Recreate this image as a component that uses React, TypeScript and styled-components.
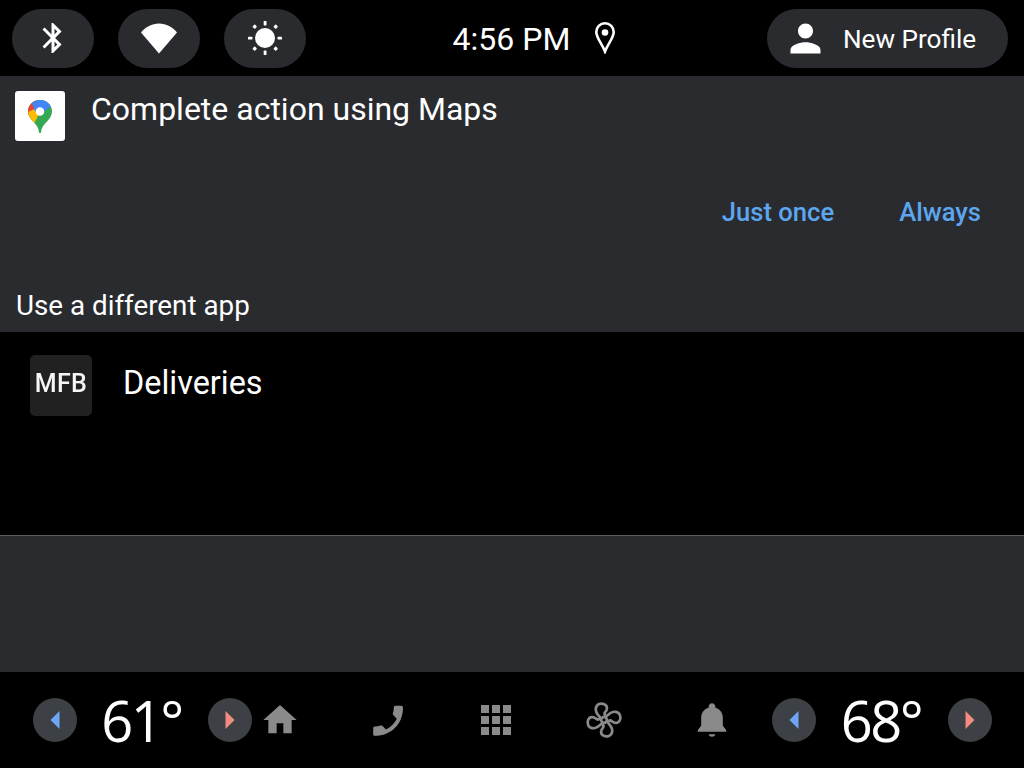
import styled, { createGlobalStyle } from "styled-components";

const GlobalStyle = createGlobalStyle`
  html, body {
    margin: 0;
    padding: 0;
    background: #000;
  }
  * {
    box-sizing: border-box;
  }
`;

const Screen = styled.div`
  width: 1024px;
  height: 768px;
  display: flex;
  flex-direction: column;
  background: #000;
  color: #fff;
  font-family: Roboto, "Liberation Sans", sans-serif;
  overflow: hidden;
`;

const TopBar = styled.div`
  height: 76px;
  flex: none;
  display: grid;
  grid-template-columns: 1fr auto 1fr;
  align-items: center;
  padding: 0 16px 0 12px;
`;

const PillRow = styled.div`
  display: flex;
  gap: 24px;
`;

const Pill = styled.div`
  width: 82px;
  height: 59px;
  border-radius: 30px;
  background: #292b2f;
  display: flex;
  align-items: center;
  justify-content: center;
`;

const Clock = styled.div`
  display: flex;
  align-items: center;
  gap: 25px;
  font-size: 32px;
  margin-left: 48px;
`;

const ClockTime = styled.span`
  margin-top: 2px;
`;

const ProfilePill = styled.div`
  justify-self: end;
  width: 241px;
  height: 59px;
  border-radius: 30px;
  background: #292b2f;
  display: flex;
  align-items: center;
  padding-left: 16px;
  gap: 15px;
  font-size: 26.1px;
`;

const ProfileName = styled.span`
  margin-top: 2px;
`;

const Chooser = styled.div`
  height: 256px;
  flex: none;
  background: #292b2f;
  display: flex;
  flex-direction: column;
`;

const TitleRow = styled.div`
  display: flex;
  padding: 15px 0 0 15px;
  gap: 26px;
`;

const MapsTile = styled.div`
  width: 50px;
  height: 50px;
  background: #fff;
  border-radius: 3px;
  display: flex;
  align-items: center;
  justify-content: center;
`;

const Title = styled.div`
  font-size: 32px;
  line-height: 36px;
`;

const Actions = styled.div`
  display: flex;
  justify-content: flex-end;
  gap: 65px;
  padding: 56px 43px 0 0;
`;

const ActionLabel = styled.div`
  color: #5ca6ef;
  font-size: 25.6px;
  font-weight: 500;
  line-height: 30px;
`;

const SectionLabel = styled.div`
  font-size: 27.8px;
  line-height: 32px;
  padding: 63px 0 0 16px;
`;

const AppList = styled.div`
  height: 204px;
  flex: none;
  display: flex;
  align-items: flex-start;
  gap: 31px;
  padding: 23px 0 0 30px;
  border-bottom: 1px solid #5a5b5e;
`;

const AppTile = styled.div`
  width: 62px;
  height: 61px;
  border-radius: 5px;
  background: #212121;
  display: flex;
  align-items: center;
  justify-content: center;
  padding-bottom: 5px;
`;

const AppTileText = styled.span`
  font-size: 25px;
  font-weight: 500;
  color: #f6f6f6;
  filter: blur(0.7px);
  letter-spacing: 0.3px;
`;

const AppName = styled.div`
  font-size: 32.4px;
  line-height: 36px;
  margin-top: 10px;
`;

const Filler = styled.div`
  height: 136px;
  flex: none;
  background: #292b2f;
`;

const BottomBar = styled.div`
  flex: 1;
  display: flex;
  align-items: center;
  padding: 0 32px 0 33px;
`;

const Climate = styled.div`
  display: flex;
  align-items: center;
  flex: none;
`;

const Temp = styled.div<{ $width: number }>`
  width: ${(p) => p.$width}px;
  padding-right: 2px;
  text-align: center;
  font-family: "Open Sans", "Noto Sans", sans-serif;
  font-size: 56px;
  line-height: 60px;
  letter-spacing: -2.5px;
`;

const Arrow = styled.div`
  width: 44px;
  height: 44px;
  border-radius: 50%;
  background: #3d4145;
  display: flex;
  align-items: center;
  justify-content: center;
`;

const NavIcons = styled.div`
  flex: 1;
  display: flex;
  justify-content: space-between;
  padding: 0 40px 0 8px;
`;

const NavIcon = styled.div`
  width: 40px;
  height: 40px;
  display: flex;
  align-items: center;
  justify-content: center;
`;

const LeftArrow = ({ color }: { color: string }) => (
  <svg width="10" height="18" viewBox="0 0 10 18">
    <path d="M9.5 0 L0.5 9 L9.5 18 Z" fill={color} />
  </svg>
);

const RightArrow = ({ color }: { color: string }) => (
  <svg width="10" height="18" viewBox="0 0 10 18">
    <path d="M0.5 0 L9.5 9 L0.5 18 Z" fill={color} />
  </svg>
);

const MapsPin = () => (
  <svg width="24" height="35" viewBox="0 0 26 36">
    <defs>
      <clipPath id="pin">
        <path d="M13 0C5.8 0 0 5.6 0 12.6c0 4 1.8 6.8 4.4 9.8 3.4 3.800 7 6.600 7.400 12.400.1.700.6 1.200 1.200 1.200s1.100-.5 1.200-1.200c.4-5.800 4-8.600 7.400-12.400 2.600-3 4.400-5.800 4.400-9.800C26 5.600 20.200 0 13 0z" />
      </clipPath>
    </defs>
    <g clipPath="url(#pin)">
      <rect width="26" height="36" fill="#34a853" />
      <path d="M0 0H26V6L17 13 7 4 Z" fill="#4285f4" />
      <path d="M0 0 H8 L12 9 L2 18 L0 16 Z" fill="#ea4335" />
      <path d="M0 13 L9 9 L13 13 L7 25 L2 20 Z" fill="#fbbc04" />
      <path d="M4 3 L9 1 L14 8 L8 13 Z" fill="#4285f4" />
    </g>
    <circle cx="13" cy="12.6" r="4.6" fill="#fff" />
  </svg>
);

const Sun = () => (
  <svg width="36" height="36" viewBox="0 0 36 36" fill="#fff">
    <circle cx="18" cy="18" r="10" />
    <rect x="16.7" y="1" width="2.8" height="4.4" rx="0.6" />
    <rect x="16.7" y="30.600" width="2.8" height="4.4" rx="0.6" />
    <rect x="1" y="16.7" width="4.4" height="2.8" rx="0.6" />
    <rect x="30.600" y="16.7" width="4.4" height="2.8" rx="0.6" />
    <rect x="6" y="5" width="3.4" height="3.4" rx="0.8" transform="rotate(45 7.7 6.7)" />
    <rect x="27" y="5" width="3.4" height="3.4" rx="0.8" transform="rotate(45 28.7 6.7)" />
    <rect x="6" y="27" width="3.4" height="3.4" rx="0.8" transform="rotate(45 7.7 28.7)" />
    <rect x="27" y="27" width="3.4" height="3.4" rx="0.8" transform="rotate(45 28.7 28.7)" />
  </svg>
);

const GRID_CELLS = [0, 1, 2, 3, 4, 5, 6, 7, 8];
const FAN_ANGLES = [0, 90, 180, 270];

// pinwheel: each blade leans over, narrow on the side facing the hub
const Fan = () => (
  <svg width="40" height="40" viewBox="-20 -20 40 40" fill="none" stroke="#8a8a8a" strokeWidth="2.700" strokeLinecap="round" strokeLinejoin="round">
    {FAN_ANGLES.map((a) => (
      <path
        key={a}
        transform={`rotate(${a - 10})`}
        d="M-3 -2.500C-5 -6 -7.500 -9 -6 -13C-4.500 -17 0 -17.500 3 -15.500C6.500 -13 5 -9.500 2.500 -7.500C1 -6.300 1.500 -4.500 2.500 -3"
      />
    ))}
    <circle r="2.800" />
  </svg>
);

export default function App() {
  return (
    <>
      <GlobalStyle />
      <Screen>
        <TopBar>
          <PillRow>
            <Pill>
              <svg width="36" height="36" viewBox="0 0 24 24" fill="#fff">
                <path d="M17.710 7.710 12 2h-1v7.590L6.410 5 5 6.410 10.590 12 5 17.590 6.410 19 11 14.410V22h1l5.710-5.710-4.300-4.290 4.300-4.290zM13 5.830l1.880 1.880L13 9.590V5.830zm1.880 10.460L13 18.170v-3.760l1.880 1.880z" />
              </svg>
            </Pill>
            <Pill>
              <svg width="38" height="32" viewBox="0 0 38 32" fill="#fff">
                <path d="M19 31.500 1 10.500C5.500 5 11.800 1.500 19 1.500S32.500 5 37 10.500z" />
              </svg>
            </Pill>
            <Pill>
              <Sun />
            </Pill>
          </PillRow>
          <Clock>
            <ClockTime>4:56 PM</ClockTime>
            <svg width="20" height="32" viewBox="0 0 20 32" fill="none">
              <path d="M10 1.300C5 1.300 1.300 5.200 1.300 10c0 6 5.500 11 8.700 19.500C13.200 21 18.700 16 18.700 10 18.700 5.200 15 1.300 10 1.300z" stroke="#fff" strokeWidth="2.600" />
              <circle cx="10" cy="10.500" r="3.300" fill="#fff" />
            </svg>
          </Clock>
          <ProfilePill>
            <svg width="45" height="45" viewBox="0 0 24 24" fill="#fff">
              <path d="M12 12c2.210 0 4-1.790 4-4s-1.790-4-4-4-4 1.790-4 4 1.790 4 4 4zm0 2c-2.670 0-8 1.340-8 4v2h16v-2c0-2.660-5.330-4-8-4z" />
            </svg>
            <ProfileName>New Profile</ProfileName>
          </ProfilePill>
        </TopBar>

        <Chooser>
          <TitleRow>
            <MapsTile>
              <MapsPin />
            </MapsTile>
            <Title>Complete action using Maps</Title>
          </TitleRow>
          <Actions>
            <ActionLabel>Just once</ActionLabel>
            <ActionLabel>Always</ActionLabel>
          </Actions>
          <SectionLabel>Use a different app</SectionLabel>
        </Chooser>

        <AppList>
          <AppTile>
            <AppTileText>MFB</AppTileText>
          </AppTile>
          <AppName>Deliveries</AppName>
        </AppList>

        <Filler />

        <BottomBar>
          <Climate>
            <Arrow>
              <LeftArrow color="#6ea6f5" />
            </Arrow>
            <Temp $width={131}>61°</Temp>
            <Arrow>
              <RightArrow color="#f28b82" />
            </Arrow>
          </Climate>
          <NavIcons>
            <NavIcon>
              <svg width="44" height="44" viewBox="0 0 24 24" fill="#8a8a8a">
                <path d="M10 20v-6h4v6h5v-8h3L12 3 2 12h3v8z" />
              </svg>
            </NavIcon>
            <NavIcon>
              <svg width="40" height="40" viewBox="0 0 24 24" fill="#8a8a8a">
                <path d="M20 3.500h-3.500c-.5 0-1 .4-1 1 0 1.200-.2 2.400-.6 3.500-.1.300 0 .7.200 1l2.200 2.200c-1.400 2.800-3.700 5-6.500 6.500l-2.200-2.200c-.3-.3-.7-.3-1-.2-1.100.4-2.300.6-3.500.6-.5 0-1 .5-1 1V20.500c0 .5.500 1 1 1C13.900 21.500 21 14.400 21 4.500c0-.5-.500-1-1-1z" />
              </svg>
            </NavIcon>
            <NavIcon>
              <svg width="32" height="32" viewBox="0 0 32 32" fill="#8a8a8a">
                {GRID_CELLS.map((i) => (
                  <rect key={i} x={1 + (i % 3) * 11} y={1 + Math.floor(i / 3) * 11} width="8" height="8" />
                ))}
              </svg>
            </NavIcon>
            <NavIcon>
              <Fan />
            </NavIcon>
            <NavIcon>
              <svg width="40" height="40" viewBox="0 0 24 24" fill="#8a8a8a">
                <path d="M12 22c1.100 0 2-.9 2-1.500h-4c0 .6.900 1.500 2 1.500zm6.500-6.500V11c0-3.100-1.600-5.600-4.500-6.300V4c0-1.100-.9-2-2-2s-2 .9-2 2v.7C7.100 5.400 5.500 7.900 5.500 11v4.500L3.500 18v1h17v-1l-2-2.500z" />
              </svg>
            </NavIcon>
          </NavIcons>
          <Climate>
            <Arrow>
              <LeftArrow color="#6ea6f5" />
            </Arrow>
            <Temp $width={132}>68°</Temp>
            <Arrow>
              <RightArrow color="#f28b82" />
            </Arrow>
          </Climate>
        </BottomBar>
      </Screen>
    </>
  );
}
